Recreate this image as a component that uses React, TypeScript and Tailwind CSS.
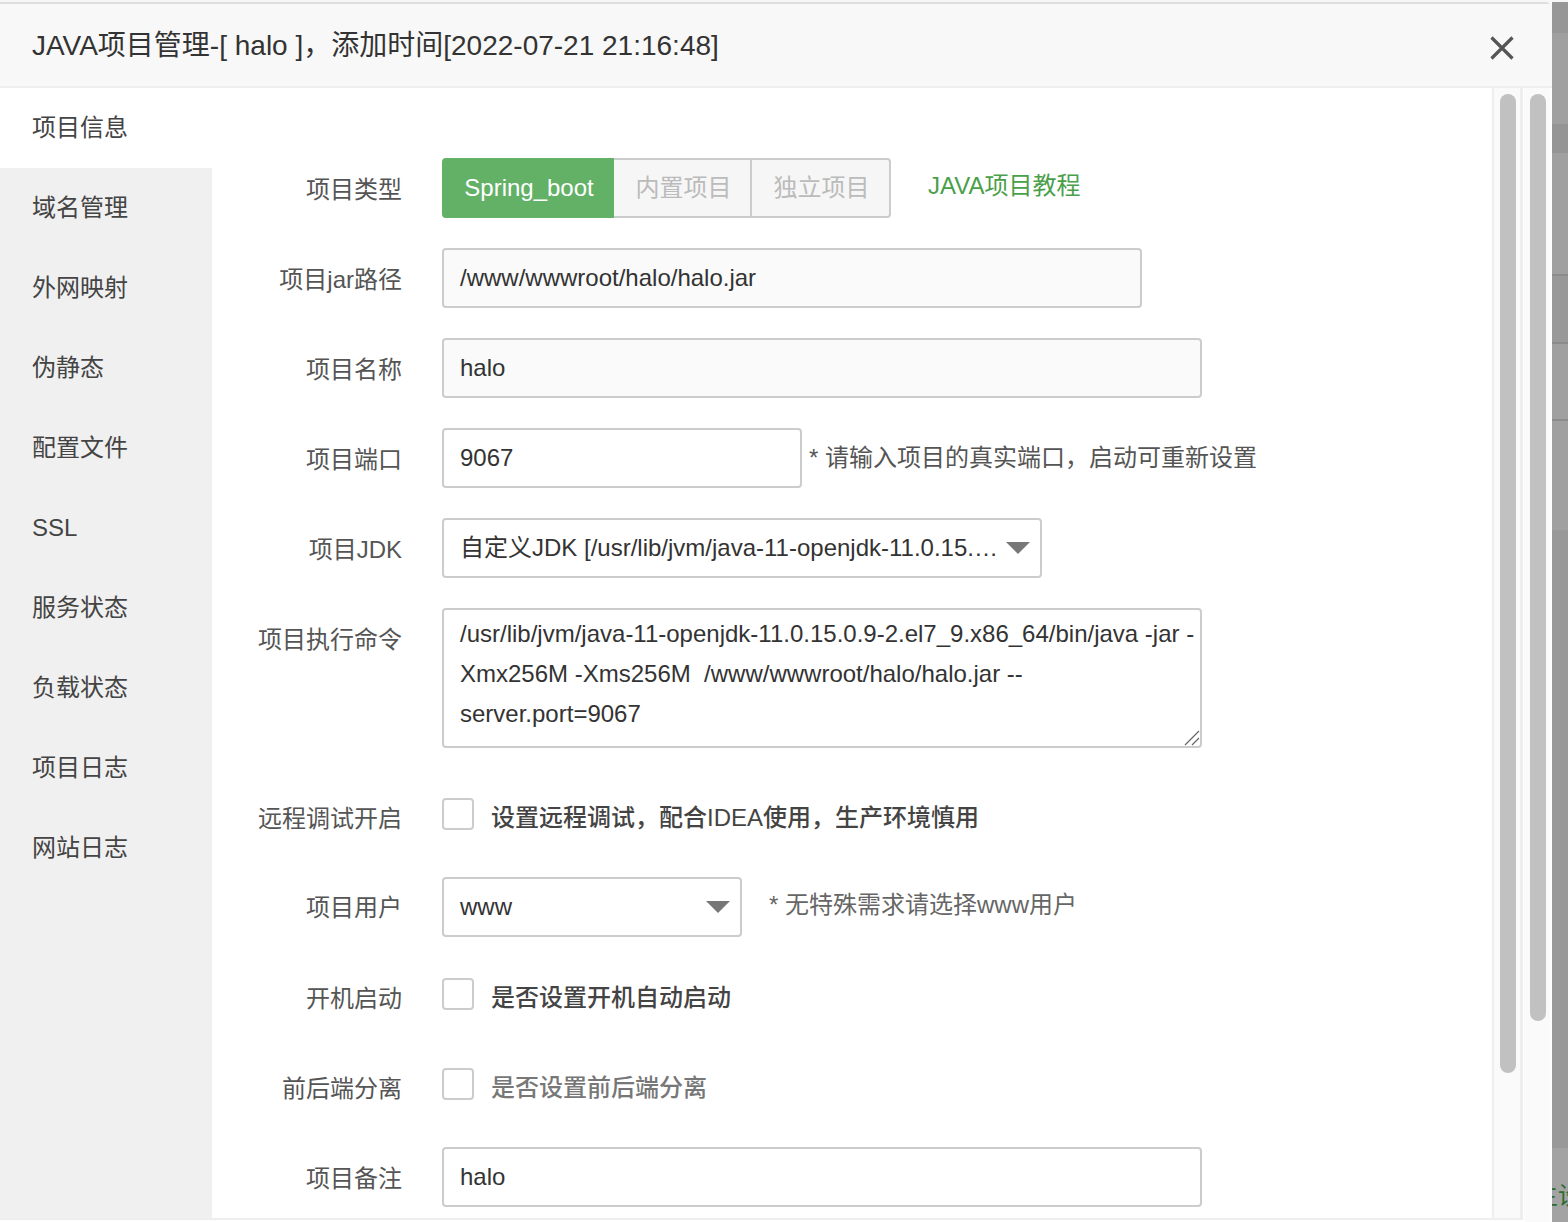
const navItems = ["项目信息", "域名管理", "外网映射", "伪静态", "配置文件", "SSL", "服务状态", "负载状态", "项目日志", "网站日志"];

function Row({ label, children, low, className }: { label: string; children: React.ReactNode; low?: boolean; className?: string }) {
  return (
    <div className={`flex ${className ?? "mb-[30px]"}`}>
      <div className={`w-[190px] shrink-0 text-right h-[60px] text-[#555] ${low ? "leading-[62px]" : "leading-[64px]"}`}>{label}</div>
      <div className="ml-[40px] flex items-start">{children}</div>
    </div>
  );
}

function Box({ className, children }: { className: string; children: React.ReactNode }) {
  return (
    <div className={`h-[60px] border-2 border-[#ccc] rounded-[4px] px-[16px] leading-[56px] text-[#333] whitespace-nowrap ${className}`}>{children}</div>
  );
}

function Caret() {
  return (
    <svg width="24" height="12" viewBox="0 0 24 12" className="shrink-0">
      <path d="M0 0H24L12 12Z" fill="#777" />
    </svg>
  );
}

function Check({ text, tone }: { text: string; tone: string }) {
  return (
    <div className="flex items-start pt-[10px]">
      <div className="w-[32px] h-[32px] border-2 border-[#ccc] rounded-[4px] bg-white shrink-0" />
      <span className={`ml-[17px] leading-[40px] ${tone}`}>{text}</span>
    </div>
  );
}

function Track({ thumb }: { thumb: string }) {
  return (
    <div className="bg-[#fafafa] h-full w-[26px] shrink-0 pt-[6px] px-[6px]">
      <div className={`w-[16px] rounded-full bg-[#c1c1c1] ${thumb}`} />
    </div>
  );
}

export default function App() {
  return (
    <div className="w-[1568px] h-[1222px] flex flex-col overflow-hidden bg-white text-[24px] font-['Liberation_Sans','Noto_Sans_CJK_SC',sans-serif]">
      <div className="h-[2px] bg-[#f6f6f6] shrink-0" />
      <div className="flex flex-1 min-h-0">
        <div className="w-[1552px] flex flex-col border-t-2 border-[#dedede] rounded-tr-[6px]">
          <div className="h-[84px] shrink-0 bg-[#f8f8f8] border-b-2 border-[#eee] flex items-center justify-between pl-[32px] pr-[38px]">
            <div className="text-[28px] text-[#333] whitespace-nowrap mt-[2px]">JAVA项目管理-[ halo ]，添加时间[2022-07-21 21:16:48]</div>
            <svg width="24" height="24" viewBox="0 0 24 24" className="mt-[6px]">
              <path d="M1.5 1.5L22.5 22.5M22.5 1.5L1.5 22.5" stroke="#555" strokeWidth="3.2" fill="none" />
            </svg>
          </div>
          <div className="flex-1 min-h-0 flex">
            <div className="w-[1523px] h-[1132px] flex border-b-2 border-[#eee] overflow-hidden">
              <div className="w-[212px] shrink-0 bg-[#f0f0f0] text-[#444]">
                {navItems.map((item, i) => (
                  <div key={item} className={`h-[80px] pl-[32px] leading-[80px] ${i === 0 ? "bg-white" : ""}`}>{item}</div>
                ))}
              </div>
              <div className="w-[1280px] shrink-0 pt-[70px]">
                <Row label="项目类型">
                  <div className="flex h-[60px] w-[449px]">
                    <div className="w-[172px] rounded-l-[4px] bg-[#62b167] text-white text-center pl-[2px] leading-[60px]">Spring_boot</div>
                    <div className="w-[138px] bg-[#f6f6f6] border-y-2 border-r-2 border-[#ccc] text-[#bbb] text-center pl-[3px] leading-[56px]">内置项目</div>
                    <div className="flex-1 bg-[#f6f6f6] border-y-2 border-r-2 border-[#ccc] rounded-r-[4px] text-[#bbb] text-center pl-[2px] leading-[56px]">独立项目</div>
                  </div>
                  <div className="ml-[37px] text-[#4a9f4a] leading-[56px]">JAVA项目教程</div>
                </Row>
                <Row label="项目jar路径">
                  <Box className="w-[700px] bg-[#fafafa]">/www/wwwroot/halo/halo.jar</Box>
                </Row>
                <Row label="项目名称">
                  <Box className="w-[760px] bg-[#fafafa]">halo</Box>
                </Row>
                <Row label="项目端口">
                  <Box className="w-[360px] bg-white">9067</Box>
                  <div className="ml-[7px] text-[#555] leading-[60px] whitespace-nowrap">* 请输入项目的真实端口，启动可重新设置</div>
                </Row>
                <Row label="项目JDK">
                  <Box className="w-[600px] bg-white flex items-center justify-between pr-[10px]">
                    <span className="w-[538px] truncate">自定义JDK [/usr/lib/jvm/java-11-openjdk-11.0.15.0.9-2.el7_9.x86_64/bin/java]</span>
                    <Caret />
                  </Box>
                </Row>
                <div className="flex mb-[40px]">
                  <div className="w-[190px] shrink-0 text-right h-[60px] leading-[64px] text-[#555]">项目执行命令</div>
                  <div className="relative ml-[40px] w-[760px] h-[140px] border-2 border-[#ccc] rounded-[4px] pl-[16px] pr-[4px] pt-[4px] leading-[40px] text-[#333] whitespace-pre-wrap bg-white">
                    {"/usr/lib/jvm/java-11-openjdk-11.0.15.0.9-2.el7_9.x86_64/bin/java -jar -Xmx256M -Xms256M  /www/wwwroot/halo/halo.jar --server.port=9067"}
                    <svg width="16" height="16" viewBox="0 0 16 16" className="absolute right-[0px] bottom-[0px]">
                      <path d="M1 15L15 1M8 15L15 8" stroke="#666" strokeWidth="1.2" fill="none" />
                    </svg>
                  </div>
                </div>
                <Row label="远程调试开启" low>
                  <Check text="设置远程调试，配合IDEA使用，生产环境慎用" tone="text-[#444] font-medium" />
                </Row>
                <Row label="项目用户" low className="-mt-[1px] mb-[31px]">
                  <Box className="w-[300px] bg-white flex items-center justify-between pr-[10px]">
                    <span>www</span>
                    <Caret />
                  </Box>
                  <div className="ml-[27px] text-[#666] leading-[56px] whitespace-nowrap">* 无特殊需求请选择www用户</div>
                </Row>
                <Row label="开机启动" low>
                  <Check text="是否设置开机自动启动" tone="text-[#444] font-medium" />
                </Row>
                <Row label="前后端分离" low className="mb-[29px]">
                  <Check text="是否设置前后端分离" tone="text-[#777] font-medium" />
                </Row>
                <Row label="项目备注" className="mb-0">
                  <Box className="w-[760px] bg-white">halo</Box>
                </Row>
              </div>
              <div className="shrink-0 h-full border-l-2 border-[#eee] border-r-[3px] box-content">
                <Track thumb="h-[979px]" />
              </div>
            </div>
            <div className="w-[1px] shrink-0 bg-white" />
            <Track thumb="h-[927px]" />
          </div>
        </div>
        <div className="w-[16px] shrink-0 flex flex-col overflow-hidden">
          <div className="h-[31px] bg-[#979797]" />
          <div className="h-[91px] bg-[#a0a0a0]" />
          <div className="h-[29px] bg-[#959595]" />
          <div className="h-[121px] bg-[#a0a0a0] border-b-2 border-[#8c8c8c] box-content" />
          <div className="h-[66px] bg-[#999] border-b-2 border-[#8c8c8c] box-content" />
          <div className="h-[75px] bg-[#a0a0a0] border-b-2 border-[#8c8c8c] box-content" />
          <div className="h-[109px] bg-[#a0a0a0]" />
          <div className="h-[618px] bg-[#999]" />
          <div className="flex-1 bg-[#a3a3a3] pt-[30px] pl-[6px] whitespace-nowrap text-[#2e6b2e]"><span className="inline-block -ml-[24px]">主设</span></div>
        </div>
      </div>
    </div>
  );
}
